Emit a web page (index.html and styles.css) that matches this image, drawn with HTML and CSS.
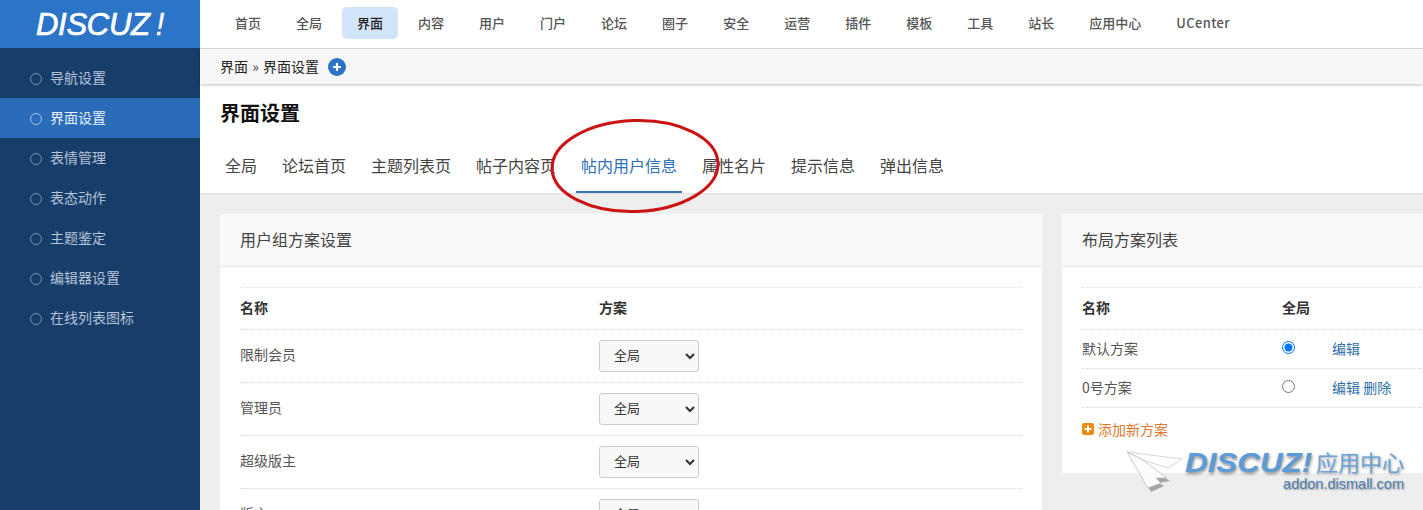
FILE: index.html
```html
<!DOCTYPE html>
<html lang="zh">
<head>
<meta charset="utf-8">
<title>界面设置</title>
<link rel="stylesheet" href="styles.css">
</head>
<body>
<div class="app">
  <aside class="side">
    <div class="logo"><span class="logo-text">DISCUZ<b>!</b></span></div>
    <ul class="menu">
      <li class="menu-item">导航设置</li>
      <li class="menu-item on">界面设置</li>
      <li class="menu-item">表情管理</li>
      <li class="menu-item">表态动作</li>
      <li class="menu-item">主题鉴定</li>
      <li class="menu-item">编辑器设置</li>
      <li class="menu-item">在线列表图标</li>
    </ul>
  </aside>
  <main class="main">
    <nav class="topnav">
      <a class="nav">首页</a><a class="nav">全局</a><a class="nav on">界面</a><a class="nav">内容</a><a class="nav">用户</a><a class="nav">门户</a><a class="nav">论坛</a><a class="nav">圈子</a><a class="nav">安全</a><a class="nav">运营</a><a class="nav">插件</a><a class="nav">模板</a><a class="nav">工具</a><a class="nav">站长</a><a class="nav">应用中心</a><a class="nav">UCenter</a>
    </nav>
    <div class="crumb">
      <span>界面 <i class="sep">»</i> 界面设置</span>
      <svg class="plus" width="18" height="18" viewBox="0 0 18 18"><circle cx="9" cy="9" r="9" fill="#2b74c7"/><path d="M9 5v8M5 9h8" stroke="#fff" stroke-width="2.2"/></svg>
    </div>
    <section class="head">
      <h1 class="title">界面设置</h1>
      <div class="tabs">
        <a class="tab">全局</a><a class="tab">论坛首页</a><a class="tab">主题列表页</a><a class="tab">帖子内容页</a><a class="tab on">帖内用户信息</a><a class="tab">属性名片</a><a class="tab">提示信息</a><a class="tab">弹出信息</a>
      </div>
    </section>
    <section class="content">
      <div class="card card-l">
        <div class="card-h">用户组方案设置</div>
        <div class="card-b">
          <div class="row row-th"><span class="c1">名称</span><span class="lab">方案</span></div>
          <div class="row"><span class="c1">限制会员</span><select class="sel"><option>全局</option></select></div>
          <div class="row"><span class="c1">管理员</span><select class="sel"><option>全局</option></select></div>
          <div class="row"><span class="c1">超级版主</span><select class="sel"><option>全局</option></select></div>
          <div class="row"><span class="c1">版主</span><select class="sel"><option>全局</option></select></div>
        </div>
      </div>
      <div class="card card-r">
        <div class="card-h">布局方案列表</div>
        <div class="card-b">
          <div class="row row-th"><span class="c2">名称</span><span class="lab">全局</span></div>
          <div class="row row-s"><span class="c2">默认方案</span><input class="radio" type="radio" name="p" checked><a class="link">编辑</a></div>
          <div class="row row-s"><span class="c2">0号方案</span><input class="radio" type="radio" name="p"><a class="link">编辑 删除</a></div>
          <a class="add"><svg width="12" height="12" viewBox="0 0 12 12"><rect width="12" height="12" rx="2" fill="#ee8a12"/><path d="M6 2.5v7M2.5 6h7" stroke="#fff" stroke-width="2"/></svg>添加新方案</a>
        </div>
      </div>
    </section>
  </main>
</div>
<svg class="ring" width="180" height="106" viewBox="0 0 180 106"><ellipse cx="90" cy="53" rx="83" ry="45.5" transform="rotate(-2 90 53)" fill="none" stroke="#cc1212" stroke-width="3"/></svg>
<div class="mark">
  <svg class="plane" width="65" height="50" viewBox="0 0 65 50"><path d="M10 10L50 36L39 38L44 41L31 47Z" fill="#000" opacity=".3"/><path d="M7 7L62 14L48 23L23 15Z" fill="#fff" stroke="#c4c4c4" stroke-width=".7"/><path d="M7 7L23 15L47 33L36 33L41 38L28 43Z" fill="#fcfcfc" stroke="#b4b4b4" stroke-width=".7"/></svg>
  <div class="mark-t">
    <div class="mark-l1"><span class="mark-logo">DISCUZ!</span><span class="mark-cn">应用中心</span></div>
    <div class="mark-l2">addon.dismall.com</div>
  </div>
</div>
</body>
</html>
```
FILE: styles.css
```css
* { box-sizing: border-box; }
html, body { margin: 0; height: 510px; overflow: hidden; }
body { font-family: "Noto Sans CJK SC", "Liberation Sans", sans-serif; font-size: 14px; color: #333; background: #fff; position: relative; }
.app { display: flex; width: 1423px; height: 510px; overflow: hidden; }
.side { flex: 0 0 200px; background: #173d6b; }
.logo { height: 48px; background: #2b74c7; display: flex; align-items: center; justify-content: center; }
.logo-text { font-family: "Liberation Sans", sans-serif; font-style: italic; font-weight: 400; font-size: 31px; line-height: 1; color: #fff; letter-spacing: -.3px; -webkit-text-stroke: .7px #fff; }
.logo-text b { margin-left: 6px; font-weight: 400; -webkit-text-stroke: .3px #fff; }
.menu { list-style: none; margin: 0; padding: 10px 0 0; }
.menu-item { height: 40px; line-height: 38px; padding-left: 50px; color: #b5c4d8; position: relative; }
.menu-item::before { content: ""; position: absolute; left: 30px; top: 15px; width: 10px; height: 10px; border: 1px solid #7f93ad; border-radius: 50%; }
.menu-item.on { background: #2b6cb9; color: #e8f0fa; }
.menu-item.on::before { border-color: #a6c4e8; }
.main { flex: 1; min-width: 0; display: flex; flex-direction: column; }
.topnav { height: 49px; display: flex; align-items: center; gap: 5px; padding: 0 0 2px 20px; border-bottom: 1px solid #ddd; flex: none; font-size: 13px; }
.nav { height: 32px; line-height: 32px; padding: 0 15px; border-radius: 5px; font-weight: 500; color: #555; white-space: nowrap; }
.nav:last-child { letter-spacing: .4px; }
.nav.on { background: #d2e4f8; color: #222; }
.crumb { height: 35px; flex: none; background: #f7f7f7; display: flex; align-items: center; gap: 9px; padding: 0 0 0 20px; color: #222; box-shadow: 0 1px 3px rgba(0,0,0,.25); position: relative; }
.crumb span { line-height: 20px; padding-bottom: 1px; }
.sep { font-style: normal; margin: 0 1px; color: #444; }
.head { height: 110px; flex: none; padding: 0 0 0 20px; border-bottom: 1px solid #ddd; }
.title { margin: 0; padding-top: 15px; font-size: 20px; line-height: 28px; font-weight: 700; color: #111; }
.tabs { display: flex; gap: 15px; margin-top: 25px; }
.tab { height: 41px; padding: 1px 5px 0; font-size: 16px; line-height: 24px; color: #444; white-space: nowrap; }
.tab.on { color: #2f70b5; border-bottom: 2px solid #3f78ad; }
.content { flex: 1; background: #eee; display: flex; gap: 20px; padding: 20px 0 0 20px; align-items: flex-start; overflow: hidden; }
.card { background: #fff; flex: none; }
.card-l { width: 822px; height: 400px; }
.card-r { width: 400px; height: 259px; }
.card-h { height: 53px; line-height: 51px; padding-left: 20px; font-size: 16px; color: #444; background: #f9f9f9; border-bottom: 1px solid #e6e6e6; }
.card-b { padding: 20px 20px 0; }
.row { height: 53px; display: flex; align-items: center; border-bottom: 1px dotted #d8d8d8; color: #555; }
.row-th { height: 43px; border-top: 1px dotted #e2e2e2; font-weight: 700; color: #333; }
.row-s { height: 39px; }
.c1 { width: 359px; flex: none; padding-bottom: 4px; }
.c2 { width: 200px; flex: none; padding-bottom: 4px; }
.row-s .c2 { padding-bottom: 2px; }
.lab { padding-bottom: 4px; }
.sel { width: 100px; height: 32px; padding: 0 0 3px 10px; font: inherit; font-size: 13px; color: #333; background: #f8f8f8; border: 1px solid #ccc; border-radius: 3px; }
.radio { margin: 0 0 3px; width: 13px; height: 13px; flex: none; }
.link { margin-left: 37px; padding-bottom: 3px; color: #2f6fa8; }
.add { display: flex; align-items: center; gap: 4px; margin-top: 11px; color: #e0762a; height: 20px; }
.ring { position: absolute; left: 545px; top: 113px; }
.mark { position: absolute; left: 1120px; top: 445px; width: 300px; display: flex; pointer-events: none; }
.plane { flex: none; }
.mark-t { margin-top: 4px; }
.mark-l1 { display: flex; align-items: flex-start; height: 27px; }
.mark-logo { display: inline-block; width: 127px; font-family: "Liberation Sans", sans-serif; font-style: italic; font-weight: 700; font-size: 28px; line-height: 27px; color: #5a9bd8; white-space: nowrap; transform: scaleX(1.12); transform-origin: left; text-shadow: 1px 2px 3px rgba(0,0,0,.45); }
.mark-cn { font-size: 22px; line-height: 24px; margin-left: 4px; color: #6ba3d8; text-shadow: 1px 1px 3px rgba(0,0,0,.4); white-space: nowrap; }
.mark-l2 { font-family: "Liberation Sans", sans-serif; font-size: 14.5px; line-height: 17px; text-align: right; color: #4d7fb0; text-shadow: 1px 1px 2px rgba(0,0,0,.35); }
```
